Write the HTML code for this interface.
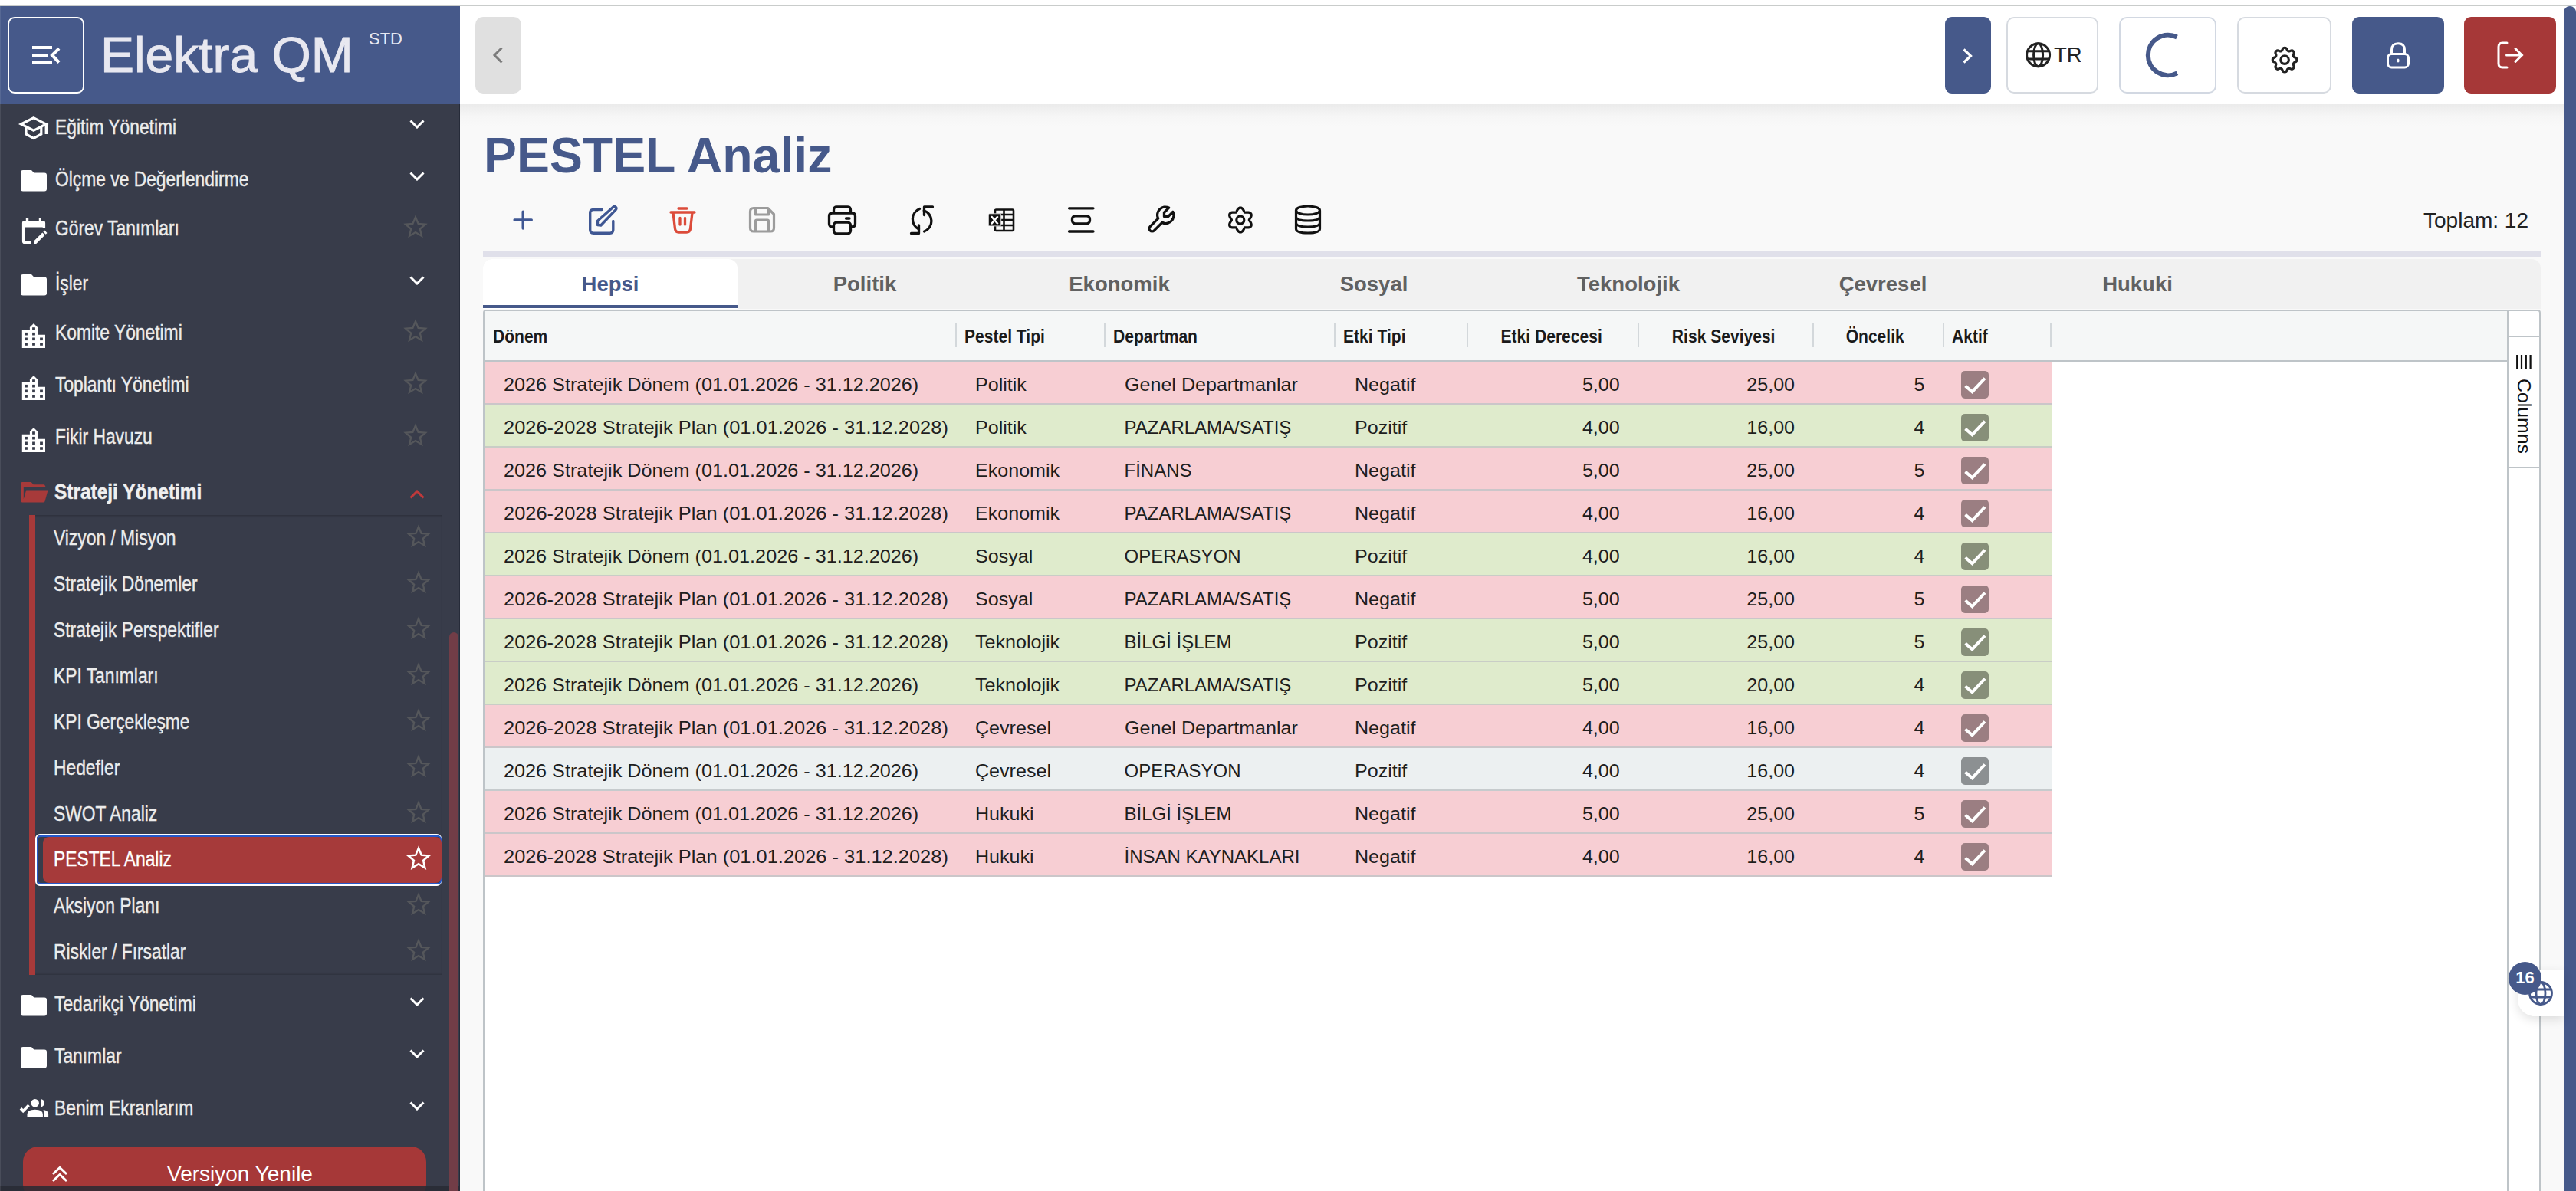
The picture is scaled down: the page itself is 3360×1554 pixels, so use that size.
<!DOCTYPE html>
<html><head><meta charset="utf-8"><style>
html,body{margin:0;padding:0;width:3360px;height:1554px;overflow:hidden;background:#fff;font-family:"Liberation Sans", sans-serif;}
body{position:relative;}
</style></head><body>
<div style="position:absolute;left:0px;top:0px;width:3360px;height:6px;background:#fff"></div>
<div style="position:absolute;left:0px;top:6px;width:3360px;height:2px;background:#c9cccb"></div>
<div style="position:absolute;left:0px;top:8px;width:600px;height:128px;background:#46598a"></div>
<div style="position:absolute;left:0px;top:136px;width:600px;height:1418px;background:#383c4a"></div>
<div style="position:absolute;left:600px;top:8px;width:2744px;height:128px;background:#fff"></div>
<div style="position:absolute;left:600px;top:136px;width:2744px;height:1418px;background:linear-gradient(#ebebeb 0px,#f6f6f6 16px,#f9f9f9 30px)"></div>
<div style="position:absolute;left:10px;top:22px;width:100px;height:100px;box-sizing:border-box;border:2px solid #fff;border-radius:9px"></div>
<svg style="position:absolute;left:40px;top:58px;" width="40" height="28" viewBox="0 0 40 28"><path d="M2 3.9H28M2 14H22M2 24H28" stroke="#fff" stroke-width="4"/><path d="M37 5.2L28 14L37 23.5" stroke="#fff" stroke-width="4" fill="none"/></svg>
<div style="position:absolute;left:131px;top:39.82px;font-size:64px;line-height:64px;color:#e8e8f0;font-weight:normal;white-space:nowrap;transform:scaleX(1.03);transform-origin:0 0;-webkit-text-stroke:0.9px #e8e8f0;">Elektra QM</div>
<div style="position:absolute;left:481px;top:40.18px;font-size:22px;line-height:22px;color:#e8e8f0;font-weight:normal;white-space:nowrap;transform-origin:0 0;">STD</div>
<svg style="position:absolute;left:24px;top:148.6px;" width="40" height="36" viewBox="0 0 40 36"><g fill="none" stroke="#fff" stroke-width="3.2" stroke-linejoin="miter"><path d="M3.5 13L19.8 4.7L36 13L19.8 21.3Z"/><path d="M10 15.5V26L19.8 31.5L29.8 26V15.5"/><path d="M36.3 12V26" stroke-width="3.4"/></g></svg>
<div style="position:absolute;left:71.5px;top:152.74px;font-size:27px;line-height:27px;color:#ececec;font-weight:normal;white-space:nowrap;transform:scaleX(0.845);transform-origin:0 0;-webkit-text-stroke:0.4px #ececec;">Eğitim Yönetimi</div>
<svg style="position:absolute;left:534px;top:156.29999999999998px;" width="20" height="12" viewBox="0 0 20 12"><path d="M1.5 1.5L10 10L18.5 1.5" stroke="#fff" stroke-width="3" fill="none" stroke-linecap="butt"/></svg>
<svg style="position:absolute;left:27px;top:221.6px;" width="34" height="28" viewBox="0 0 34 28"><path d="M0 3Q0 0 3 0H14L17.3 3.5H31Q34 3.5 34 6.5V24.5Q34 27.5 31 27.5H3Q0 27.5 0 24.5Z" fill="#fff"/></svg>
<div style="position:absolute;left:71.5px;top:220.74px;font-size:27px;line-height:27px;color:#ececec;font-weight:normal;white-space:nowrap;transform:scaleX(0.845);transform-origin:0 0;-webkit-text-stroke:0.4px #ececec;">Ölçme ve Değerlendirme</div>
<svg style="position:absolute;left:534px;top:224.29999999999998px;" width="20" height="12" viewBox="0 0 20 12"><path d="M1.5 1.5L10 10L18.5 1.5" stroke="#fff" stroke-width="3" fill="none" stroke-linecap="butt"/></svg>
<svg style="position:absolute;left:28px;top:283.70000000000005px;" width="34" height="35" viewBox="0 0 34 35"><path d="M0.9 7Q0.9 3.9 4 3.9H5.8V0.7H9.2V3.9H22.8V0.7H26V3.9H28Q31.1 3.9 31.1 7V14H27.7V12.4H4.3V30.7H13V34.1H4Q0.9 34.1 0.9 31Z" fill="#fff"/><path d="M16 34.1V30.8L27.3 19.5L30.6 22.8L19.3 34.1Z" fill="#fff"/><path d="M28.4 18.4L30.2 16.6L33.5 19.9L31.7 21.7Z" fill="#fff"/></svg>
<div style="position:absolute;left:72px;top:285.34px;font-size:27px;line-height:27px;color:#ececec;font-weight:normal;white-space:nowrap;transform:scaleX(0.845);transform-origin:0 0;-webkit-text-stroke:0.4px #ececec;">Görev Tanımları</div>
<svg style="position:absolute;left:0;top:0" width="600" height="1554" viewBox="0 0 600 1554"><polygon points="542.00,283.30 545.60,291.95 554.93,292.70 547.82,298.79 549.99,307.90 542.00,303.02 534.01,307.90 536.18,298.79 529.07,292.70 538.40,291.95" fill="none" stroke="#55575b" stroke-width="2.3" stroke-linejoin="miter"/></svg>
<svg style="position:absolute;left:27px;top:357.6px;" width="34" height="28" viewBox="0 0 34 28"><path d="M0 3Q0 0 3 0H14L17.3 3.5H31Q34 3.5 34 6.5V24.5Q34 27.5 31 27.5H3Q0 27.5 0 24.5Z" fill="#fff"/></svg>
<div style="position:absolute;left:71.5px;top:356.74px;font-size:27px;line-height:27px;color:#ececec;font-weight:normal;white-space:nowrap;transform:scaleX(0.845);transform-origin:0 0;-webkit-text-stroke:0.4px #ececec;">İşler</div>
<svg style="position:absolute;left:534px;top:360.3px;" width="20" height="12" viewBox="0 0 20 12"><path d="M1.5 1.5L10 10L18.5 1.5" stroke="#fff" stroke-width="3" fill="none" stroke-linecap="butt"/></svg>
<svg style="position:absolute;left:28px;top:420.70000000000005px;" width="32" height="34" viewBox="0 0 32 34"><path d="M0.8 9.7H10.9V6L16 1L21 6V15.8H31V33H0.8Z" fill="#fff"/><rect x="4.1" y="12.899999999999999" width="3.8" height="3.6" fill="#383c4a"/><rect x="14.1" y="6.2" width="3.8" height="3.6" fill="#383c4a"/><rect x="14.1" y="12.899999999999999" width="3.8" height="3.6" fill="#383c4a"/><rect x="4.1" y="19.5" width="3.8" height="3.6" fill="#383c4a"/><rect x="14.1" y="19.5" width="3.8" height="3.6" fill="#383c4a"/><rect x="24.1" y="19.5" width="3.8" height="3.6" fill="#383c4a"/><rect x="4.1" y="26.2" width="3.8" height="3.6" fill="#383c4a"/><rect x="14.1" y="26.2" width="3.8" height="3.6" fill="#383c4a"/><rect x="24.1" y="26.2" width="3.8" height="3.6" fill="#383c4a"/></svg>
<div style="position:absolute;left:71.5px;top:421.34px;font-size:27px;line-height:27px;color:#ececec;font-weight:normal;white-space:nowrap;transform:scaleX(0.845);transform-origin:0 0;-webkit-text-stroke:0.4px #ececec;">Komite Yönetimi</div>
<svg style="position:absolute;left:0;top:0" width="600" height="1554" viewBox="0 0 600 1554"><polygon points="542.00,419.30 545.60,427.95 554.93,428.70 547.82,434.79 549.99,443.90 542.00,439.02 534.01,443.90 536.18,434.79 529.07,428.70 538.40,427.95" fill="none" stroke="#55575b" stroke-width="2.3" stroke-linejoin="miter"/></svg>
<svg style="position:absolute;left:28px;top:488.70000000000005px;" width="32" height="34" viewBox="0 0 32 34"><path d="M0.8 9.7H10.9V6L16 1L21 6V15.8H31V33H0.8Z" fill="#fff"/><rect x="4.1" y="12.899999999999999" width="3.8" height="3.6" fill="#383c4a"/><rect x="14.1" y="6.2" width="3.8" height="3.6" fill="#383c4a"/><rect x="14.1" y="12.899999999999999" width="3.8" height="3.6" fill="#383c4a"/><rect x="4.1" y="19.5" width="3.8" height="3.6" fill="#383c4a"/><rect x="14.1" y="19.5" width="3.8" height="3.6" fill="#383c4a"/><rect x="24.1" y="19.5" width="3.8" height="3.6" fill="#383c4a"/><rect x="4.1" y="26.2" width="3.8" height="3.6" fill="#383c4a"/><rect x="14.1" y="26.2" width="3.8" height="3.6" fill="#383c4a"/><rect x="24.1" y="26.2" width="3.8" height="3.6" fill="#383c4a"/></svg>
<div style="position:absolute;left:71.5px;top:489.34px;font-size:27px;line-height:27px;color:#ececec;font-weight:normal;white-space:nowrap;transform:scaleX(0.845);transform-origin:0 0;-webkit-text-stroke:0.4px #ececec;">Toplantı Yönetimi</div>
<svg style="position:absolute;left:0;top:0" width="600" height="1554" viewBox="0 0 600 1554"><polygon points="542.00,487.30 545.60,495.95 554.93,496.70 547.82,502.79 549.99,511.90 542.00,507.02 534.01,511.90 536.18,502.79 529.07,496.70 538.40,495.95" fill="none" stroke="#55575b" stroke-width="2.3" stroke-linejoin="miter"/></svg>
<svg style="position:absolute;left:28px;top:556.7px;" width="32" height="34" viewBox="0 0 32 34"><path d="M0.8 9.7H10.9V6L16 1L21 6V15.8H31V33H0.8Z" fill="#fff"/><rect x="4.1" y="12.899999999999999" width="3.8" height="3.6" fill="#383c4a"/><rect x="14.1" y="6.2" width="3.8" height="3.6" fill="#383c4a"/><rect x="14.1" y="12.899999999999999" width="3.8" height="3.6" fill="#383c4a"/><rect x="4.1" y="19.5" width="3.8" height="3.6" fill="#383c4a"/><rect x="14.1" y="19.5" width="3.8" height="3.6" fill="#383c4a"/><rect x="24.1" y="19.5" width="3.8" height="3.6" fill="#383c4a"/><rect x="4.1" y="26.2" width="3.8" height="3.6" fill="#383c4a"/><rect x="14.1" y="26.2" width="3.8" height="3.6" fill="#383c4a"/><rect x="24.1" y="26.2" width="3.8" height="3.6" fill="#383c4a"/></svg>
<div style="position:absolute;left:71.5px;top:557.34px;font-size:27px;line-height:27px;color:#ececec;font-weight:normal;white-space:nowrap;transform:scaleX(0.845);transform-origin:0 0;-webkit-text-stroke:0.4px #ececec;">Fikir Havuzu</div>
<svg style="position:absolute;left:0;top:0" width="600" height="1554" viewBox="0 0 600 1554"><polygon points="542.00,555.30 545.60,563.95 554.93,564.70 547.82,570.79 549.99,579.90 542.00,575.02 534.01,579.90 536.18,570.79 529.07,564.70 538.40,563.95" fill="none" stroke="#55575b" stroke-width="2.3" stroke-linejoin="miter"/></svg>
<svg style="position:absolute;left:27px;top:628.6px;" width="36" height="27" viewBox="0 0 36 27"><path d="M0 2Q0 0 2 0H13.6L16.7 3.3H29.8Q31.2 3.3 31.7 4.5L32.7 6.6H3.8V22.3L7.2 10.4H35.6L31.6 25Q31.2 26.5 29.4 26.5H2Q0 26.5 0 24.5Z" fill="#a73a3a"/></svg>
<div style="position:absolute;left:71px;top:628.74px;font-size:27px;line-height:27px;color:#f0f0f0;font-weight:bold;white-space:nowrap;transform:scaleX(0.905);transform-origin:0 0;-webkit-text-stroke:0.5px #f0f0f0;">Strateji Yönetimi</div>
<svg style="position:absolute;left:534px;top:639.1px;" width="20" height="12" viewBox="0 0 20 12"><path d="M1.5 10.5L10 2L18.5 10.5" stroke="#c0393b" stroke-width="3" fill="none" stroke-linecap="butt"/></svg>
<div style="position:absolute;left:38px;top:672px;width:538px;height:600px;background:#383c4a;box-shadow:inset 0 3px 3px -2px rgba(0,0,0,.25), inset 0 -3px 3px -2px rgba(0,0,0,.2)"></div>
<div style="position:absolute;left:38px;top:672px;width:8px;height:600px;background:#a73a3a"></div>
<div style="position:absolute;left:70px;top:689.14px;font-size:27px;line-height:27px;color:#ececec;font-weight:normal;white-space:nowrap;transform:scaleX(0.845);transform-origin:0 0;-webkit-text-stroke:0.4px #ececec;">Vizyon / Misyon</div>
<svg style="position:absolute;left:0;top:0" width="600" height="1554" viewBox="0 0 600 1554"><polygon points="546.00,687.30 549.60,695.95 558.93,696.70 551.82,702.79 553.99,711.90 546.00,707.02 538.01,711.90 540.18,702.79 533.07,696.70 542.40,695.95" fill="none" stroke="#55575b" stroke-width="2.3" stroke-linejoin="miter"/></svg>
<div style="position:absolute;left:70px;top:749.14px;font-size:27px;line-height:27px;color:#ececec;font-weight:normal;white-space:nowrap;transform:scaleX(0.845);transform-origin:0 0;-webkit-text-stroke:0.4px #ececec;">Stratejik Dönemler</div>
<svg style="position:absolute;left:0;top:0" width="600" height="1554" viewBox="0 0 600 1554"><polygon points="546.00,747.30 549.60,755.95 558.93,756.70 551.82,762.79 553.99,771.90 546.00,767.02 538.01,771.90 540.18,762.79 533.07,756.70 542.40,755.95" fill="none" stroke="#55575b" stroke-width="2.3" stroke-linejoin="miter"/></svg>
<div style="position:absolute;left:70px;top:809.14px;font-size:27px;line-height:27px;color:#ececec;font-weight:normal;white-space:nowrap;transform:scaleX(0.845);transform-origin:0 0;-webkit-text-stroke:0.4px #ececec;">Stratejik Perspektifler</div>
<svg style="position:absolute;left:0;top:0" width="600" height="1554" viewBox="0 0 600 1554"><polygon points="546.00,807.30 549.60,815.95 558.93,816.70 551.82,822.79 553.99,831.90 546.00,827.02 538.01,831.90 540.18,822.79 533.07,816.70 542.40,815.95" fill="none" stroke="#55575b" stroke-width="2.3" stroke-linejoin="miter"/></svg>
<div style="position:absolute;left:70px;top:869.14px;font-size:27px;line-height:27px;color:#ececec;font-weight:normal;white-space:nowrap;transform:scaleX(0.845);transform-origin:0 0;-webkit-text-stroke:0.4px #ececec;">KPI Tanımları</div>
<svg style="position:absolute;left:0;top:0" width="600" height="1554" viewBox="0 0 600 1554"><polygon points="546.00,867.30 549.60,875.95 558.93,876.70 551.82,882.79 553.99,891.90 546.00,887.02 538.01,891.90 540.18,882.79 533.07,876.70 542.40,875.95" fill="none" stroke="#55575b" stroke-width="2.3" stroke-linejoin="miter"/></svg>
<div style="position:absolute;left:70px;top:929.14px;font-size:27px;line-height:27px;color:#ececec;font-weight:normal;white-space:nowrap;transform:scaleX(0.845);transform-origin:0 0;-webkit-text-stroke:0.4px #ececec;">KPI Gerçekleşme</div>
<svg style="position:absolute;left:0;top:0" width="600" height="1554" viewBox="0 0 600 1554"><polygon points="546.00,927.30 549.60,935.95 558.93,936.70 551.82,942.79 553.99,951.90 546.00,947.02 538.01,951.90 540.18,942.79 533.07,936.70 542.40,935.95" fill="none" stroke="#55575b" stroke-width="2.3" stroke-linejoin="miter"/></svg>
<div style="position:absolute;left:70px;top:989.14px;font-size:27px;line-height:27px;color:#ececec;font-weight:normal;white-space:nowrap;transform:scaleX(0.845);transform-origin:0 0;-webkit-text-stroke:0.4px #ececec;">Hedefler</div>
<svg style="position:absolute;left:0;top:0" width="600" height="1554" viewBox="0 0 600 1554"><polygon points="546.00,987.30 549.60,995.95 558.93,996.70 551.82,1002.79 553.99,1011.90 546.00,1007.02 538.01,1011.90 540.18,1002.79 533.07,996.70 542.40,995.95" fill="none" stroke="#55575b" stroke-width="2.3" stroke-linejoin="miter"/></svg>
<div style="position:absolute;left:70px;top:1049.14px;font-size:27px;line-height:27px;color:#ececec;font-weight:normal;white-space:nowrap;transform:scaleX(0.845);transform-origin:0 0;-webkit-text-stroke:0.4px #ececec;">SWOT Analiz</div>
<svg style="position:absolute;left:0;top:0" width="600" height="1554" viewBox="0 0 600 1554"><polygon points="546.00,1047.30 549.60,1055.95 558.93,1056.70 551.82,1062.79 553.99,1071.90 546.00,1067.02 538.01,1071.90 540.18,1062.79 533.07,1056.70 542.40,1055.95" fill="none" stroke="#55575b" stroke-width="2.3" stroke-linejoin="miter"/></svg>
<div style="position:absolute;left:46px;top:1088px;width:530px;height:68px;box-sizing:border-box;border:2px solid #fff;border-radius:6px"></div>
<div style="position:absolute;left:47.5px;top:1090px;width:528.5px;height:64px;box-sizing:border-box;border:2.2px solid #2458c9;border-radius:5px;background:#383c4a"></div>
<div style="position:absolute;left:56px;top:1092px;width:520px;height:60px;background:#a63a3a;border-radius:8px"></div>
<div style="position:absolute;left:70px;top:1108.14px;font-size:27px;line-height:27px;color:#fff;font-weight:normal;white-space:nowrap;transform:scaleX(0.845);transform-origin:0 0;-webkit-text-stroke:0.4px #fff;">PESTEL Analiz</div>
<svg style="position:absolute;left:0;top:0" width="600" height="1554" viewBox="0 0 600 1554"><polygon points="546.00,1106.60 549.76,1115.63 559.51,1116.41 552.08,1122.77 554.35,1132.29 546.00,1127.19 537.65,1132.29 539.92,1122.77 532.49,1116.41 542.24,1115.63" fill="none" stroke="#fff" stroke-width="2.5" stroke-linejoin="miter"/></svg>
<div style="position:absolute;left:70px;top:1169.14px;font-size:27px;line-height:27px;color:#ececec;font-weight:normal;white-space:nowrap;transform:scaleX(0.845);transform-origin:0 0;-webkit-text-stroke:0.4px #ececec;">Aksiyon Planı</div>
<svg style="position:absolute;left:0;top:0" width="600" height="1554" viewBox="0 0 600 1554"><polygon points="546.00,1167.30 549.60,1175.95 558.93,1176.70 551.82,1182.79 553.99,1191.90 546.00,1187.02 538.01,1191.90 540.18,1182.79 533.07,1176.70 542.40,1175.95" fill="none" stroke="#55575b" stroke-width="2.3" stroke-linejoin="miter"/></svg>
<div style="position:absolute;left:70px;top:1229.14px;font-size:27px;line-height:27px;color:#ececec;font-weight:normal;white-space:nowrap;transform:scaleX(0.845);transform-origin:0 0;-webkit-text-stroke:0.4px #ececec;">Riskler / Fırsatlar</div>
<svg style="position:absolute;left:0;top:0" width="600" height="1554" viewBox="0 0 600 1554"><polygon points="546.00,1227.30 549.60,1235.95 558.93,1236.70 551.82,1242.79 553.99,1251.90 546.00,1247.02 538.01,1251.90 540.18,1242.79 533.07,1236.70 542.40,1235.95" fill="none" stroke="#55575b" stroke-width="2.3" stroke-linejoin="miter"/></svg>
<svg style="position:absolute;left:27px;top:1297.6px;" width="34" height="28" viewBox="0 0 34 28"><path d="M0 3Q0 0 3 0H14L17.3 3.5H31Q34 3.5 34 6.5V24.5Q34 27.5 31 27.5H3Q0 27.5 0 24.5Z" fill="#fff"/></svg>
<div style="position:absolute;left:71px;top:1296.74px;font-size:27px;line-height:27px;color:#ececec;font-weight:normal;white-space:nowrap;transform:scaleX(0.845);transform-origin:0 0;-webkit-text-stroke:0.4px #ececec;">Tedarikçi Yönetimi</div>
<svg style="position:absolute;left:534px;top:1300.6px;" width="20" height="12" viewBox="0 0 20 12"><path d="M1.5 1.5L10 10L18.5 1.5" stroke="#fff" stroke-width="3" fill="none" stroke-linecap="butt"/></svg>
<svg style="position:absolute;left:27px;top:1365.6px;" width="34" height="28" viewBox="0 0 34 28"><path d="M0 3Q0 0 3 0H14L17.3 3.5H31Q34 3.5 34 6.5V24.5Q34 27.5 31 27.5H3Q0 27.5 0 24.5Z" fill="#fff"/></svg>
<div style="position:absolute;left:71px;top:1364.74px;font-size:27px;line-height:27px;color:#ececec;font-weight:normal;white-space:nowrap;transform:scaleX(0.845);transform-origin:0 0;-webkit-text-stroke:0.4px #ececec;">Tanımlar</div>
<svg style="position:absolute;left:534px;top:1368.6px;" width="20" height="12" viewBox="0 0 20 12"><path d="M1.5 1.5L10 10L18.5 1.5" stroke="#fff" stroke-width="3" fill="none" stroke-linecap="butt"/></svg>
<svg style="position:absolute;left:24px;top:1430.1px;" width="42" height="30" viewBox="0 0 42 30"><path d="M3 16.2L6.2 19.7L13.6 12" stroke="#fff" stroke-width="3.6" fill="none"/><circle cx="21.7" cy="9.2" r="5.2" fill="#fff"/><path d="M11.5 27.9V24Q11.5 17.7 21.7 17.7Q31.9 17.7 31.9 24V27.9Z" fill="#fff"/><path d="M28.9 3.9A5.2 5.2 0 0 1 28.9 14.3Q31 9.1 28.9 3.9Z" fill="#fff"/><path d="M32.5 18Q39.1 19 39.1 24V27.9H34V24Q34 20 32.5 18Z" fill="#fff"/></svg>
<div style="position:absolute;left:71px;top:1432.74px;font-size:27px;line-height:27px;color:#ececec;font-weight:normal;white-space:nowrap;transform:scaleX(0.845);transform-origin:0 0;-webkit-text-stroke:0.4px #ececec;">Benim Ekranlarım</div>
<svg style="position:absolute;left:534px;top:1436.6px;" width="20" height="12" viewBox="0 0 20 12"><path d="M1.5 1.5L10 10L18.5 1.5" stroke="#fff" stroke-width="3" fill="none" stroke-linecap="butt"/></svg>
<div style="position:absolute;left:30px;top:1496px;width:526px;height:70px;background:#a63838;border-radius:20px"></div>
<svg style="position:absolute;left:66px;top:1520px;" width="24" height="24" viewBox="0 0 24 24"><path d="M3 12L12 3.5L21 12M3 21L12 12.5L21 21" stroke="#fff" stroke-width="3" fill="none"/></svg>
<div style="position:absolute;left:218px;top:1518.00px;font-size:28px;line-height:28px;color:#fff;font-weight:normal;white-space:nowrap;transform-origin:0 0;">Versiyon Yenile</div>
<div style="position:absolute;left:0px;top:1547px;width:600px;height:7px;background:rgba(40,42,52,.85)"></div>
<div style="position:absolute;left:586px;top:824.5px;width:12px;height:730px;background:#723d47;border-radius:6px 6px 0 0"></div>
<div style="position:absolute;left:599px;top:136px;width:1px;height:1418px;background:#262b39"></div>
<div style="position:absolute;left:0px;top:8px;width:1px;height:1546px;background:rgba(255,255,255,.09)"></div>
<div style="position:absolute;left:620px;top:22px;width:60px;height:100px;background:#e0e0e0;border-radius:10px"></div>
<svg style="position:absolute;left:640px;top:60px;" width="20" height="24" viewBox="0 0 20 24"><path d="M14.5 2.5L5 12L14.5 21.5" stroke="#7c7c7c" stroke-width="3" fill="none"/></svg>
<div style="position:absolute;left:2537px;top:22px;width:60px;height:100px;background:#46598a;border-radius:9px"></div>
<svg style="position:absolute;left:2557px;top:62px;" width="20" height="22" viewBox="0 0 20 22"><path d="M4.5 2.5L13.5 11L4.5 19.5" stroke="#fff" stroke-width="3.2" fill="none"/></svg>
<div style="position:absolute;left:2617px;top:22px;width:120px;height:100px;box-sizing:border-box;border:2px solid #d6dae0;border-radius:10px;background:#fff"></div>
<svg style="position:absolute;left:2640px;top:53px;" width="38" height="38" viewBox="0 0 38 38"><g fill="none" stroke="#222" stroke-width="3"><circle cx="18.6" cy="18.8" r="15"/><ellipse cx="18.6" cy="18.8" rx="6" ry="15"/><path d="M4 13.7H33.2M4 23.9H33.2"/></g></svg>
<div style="position:absolute;left:2679px;top:58.42px;font-size:27.5px;line-height:27.5px;color:#222;font-weight:normal;white-space:nowrap;transform-origin:0 0;">TR</div>
<div style="position:absolute;left:2764px;top:22px;width:127px;height:100px;box-sizing:border-box;border:2px solid #d2d8e2;border-radius:10px;background:#fff"></div>
<svg style="position:absolute;left:0;top:0" width="3360" height="140"><path d="M2839.49 48.45 A26.2 26.2 0 1 0 2839.89 95.34" stroke="#46598a" stroke-width="6" fill="none"/></svg>
<div style="position:absolute;left:2918px;top:22px;width:123px;height:100px;box-sizing:border-box;border:2px solid #d6dae0;border-radius:10px;background:#fff"></div>
<svg style="position:absolute;left:2958.8px;top:56.6px;" width="42.2" height="42.2" viewBox="0 0 24 24"><g fill="none" stroke="#222" stroke-width="1.8" stroke-linecap="round" stroke-linejoin="round"><path d="M10.325 4.317c.426 -1.756 2.924 -1.756 3.35 0a1.724 1.724 0 0 0 2.573 1.066c1.543 -.94 3.31 .826 2.37 2.37a1.724 1.724 0 0 0 1.065 2.572c1.756 .426 1.756 2.924 0 3.35a1.724 1.724 0 0 0 -1.066 2.573c.94 1.543 -.826 3.31 -2.37 2.37a1.724 1.724 0 0 0 -2.572 1.065c-.426 1.756 -2.924 1.756 -3.35 0a1.724 1.724 0 0 0 -2.573 -1.066c-1.543 .94 -3.31 -.826 -2.37 -2.37a1.724 1.724 0 0 0 -1.065 -2.572c-1.756 -.426 -1.756 -2.924 0 -3.35a1.724 1.724 0 0 0 1.066 -2.573c-.94 -1.543 .826 -3.31 2.37 -2.37c1 .608 2.296 .07 2.572 -1.065z"/><path d="M9 12a3 3 0 1 0 6 0a3 3 0 0 0 -6 0"/></g></svg>
<div style="position:absolute;left:3068px;top:22px;width:120px;height:100px;background:#46598a;border-radius:9px"></div>
<svg style="position:absolute;left:3110px;top:53px;" width="36" height="38" viewBox="0 0 36 38"><g fill="none" stroke="#fff" stroke-width="3"><rect x="4.5" y="17.5" width="27" height="17.5" rx="5"/><path d="M9.5 17.5V12Q9.5 3.7 18 3.7Q26.5 3.7 26.5 12V17.5"/></g><ellipse cx="18" cy="26" rx="1.6" ry="2.6" fill="#fff"/></svg>
<div style="position:absolute;left:3214px;top:22px;width:120px;height:100px;background:#a63838;border-radius:9px"></div>
<svg style="position:absolute;left:3254px;top:52px;" width="40" height="40" viewBox="0 0 40 40"><g fill="none" stroke="#fff" stroke-width="3" stroke-linecap="round"><path d="M16 4H10Q5 4 5 9V31Q5 36 10 36H16"/><path d="M15.5 20H35M27 11.5L35.5 20L27 28.5"/></g></svg>
<div style="position:absolute;left:3344px;top:8px;width:16px;height:1546px;background:#46598a;border-radius:8px 8px 0 0"></div>
<div style="position:absolute;left:631px;top:171.32px;font-size:64px;line-height:64px;color:#46598a;font-weight:bold;white-space:nowrap;transform:scaleX(1.006);transform-origin:0 0;">PESTEL Analiz</div>
<div style="position:absolute;right:62px;top:273.70px;font-size:28px;line-height:28px;color:#222;font-weight:normal;white-space:nowrap;transform-origin:100% 0;">Toplam: 12</div>
<svg style="position:absolute;left:664px;top:270px;" width="36" height="34" viewBox="0 0 36 34"><path d="M18.2 6.1V28M7.1 17H29.3" stroke="#3f5793" stroke-width="3.4" stroke-linecap="round"/></svg>
<svg style="position:absolute;left:764px;top:266px;" width="44" height="42" viewBox="0 0 44 42"><g fill="none" stroke="#3f5793" stroke-width="3.4" stroke-linecap="round" stroke-linejoin="round"><path d="M21 7.5H10Q5.7 7.5 5.7 11.8V33.8Q5.7 38.2 10 38.2H31.6Q35.8 38.2 35.8 33.8V22.5"/><path d="M15.5 27.5V22.3L35.7 4.2Q37.4 2.7 39.1 4.3Q40.7 5.9 39.2 7.6L19.8 28Z"/></g></svg>
<svg style="position:absolute;left:870px;top:268px;" width="40" height="40" viewBox="0 0 40 40"><g fill="none" stroke="#dc4b3a" stroke-width="3.3" stroke-linecap="round" stroke-linejoin="round"><path d="M15 4H26M5 9H36M8 9.5L10.5 30.5Q11 35 15.5 35H25.5Q30 35 30.5 30.5L33 9.5M17 16.5V25M23.5 16.5V25"/></g></svg>
<svg style="position:absolute;left:974px;top:266px;" width="40" height="42" viewBox="0 0 40 42"><g fill="none" stroke="#9c9c9c" stroke-width="3.2" stroke-linejoin="round"><path d="M9 5.5H27.5L35.5 13.5V31.5Q35.5 36 31 36H9Q4.5 36 4.5 31.5V10Q4.5 5.5 9 5.5Z"/><path d="M11.5 5.5V14H28.5V5.5M11.5 36V22.5Q11.5 21 13 21H27Q28.5 21 28.5 22.5V36"/></g></svg>
<svg style="position:absolute;left:1078px;top:266px;" width="40" height="42" viewBox="0 0 40 42"><g fill="none" stroke="#111" stroke-width="3.3" stroke-linejoin="round"><path d="M9.5 12V8Q9.5 4 13.5 4H27.5Q31.5 4 31.5 8V12"/><path d="M9 30H7.5Q3.5 30 3.5 26V16Q3.5 12 7.5 12H33.5Q37.5 12 37.5 16V26Q37.5 30 33.5 30H32"/><rect x="9.5" y="24" width="22" height="15" rx="4"/><path d="M25.5 19H30" stroke-linecap="round"/></g></svg>
<svg style="position:absolute;left:1182px;top:266px;" width="40" height="42" viewBox="0 0 40 42"><g fill="none" stroke="#111" stroke-width="3.3" stroke-linecap="round" stroke-linejoin="round"><path d="M17.5 6.5A14.5 14.5 0 0 0 16.5 33"/><path d="M6.5 38.5H16.5V28"/><path d="M23.5 36A14.5 14.5 0 0 0 23.2 8.7"/><path d="M34.5 4H23.5V14.5"/></g></svg>
<svg style="position:absolute;left:1286px;top:268px;" width="40" height="36" viewBox="0 0 40 36"><g fill="none" stroke="#111" stroke-width="2.6"><rect x="12" y="5.5" width="24" height="27.5" rx="1.5"/><path d="M23.5 5.5V33M12 12H36M12 19H36M12 26H36"/></g><rect x="3.3" y="10.8" width="16.4" height="16.1" rx="1.5" fill="#111" stroke="#fafafa" stroke-width="0.8"/><path d="M7 14.2L15.6 24.2M15.6 14.2L7 24.2" stroke="#fff" stroke-width="2.5"/></svg>
<svg style="position:absolute;left:1390px;top:266px;" width="40" height="40" viewBox="0 0 40 40"><g fill="none" stroke="#111" stroke-width="3.3" stroke-linecap="round"><path d="M4.5 5.8H36M4.5 36H36"/><rect x="8.5" y="15.8" width="23" height="10" rx="4"/></g></svg>
<svg style="position:absolute;left:1493.6px;top:265px;" width="42" height="42" viewBox="0 0 24 24"><g transform="translate(24,0) scale(-1,1)"><path d="M7 10h3v-3l-3.5 -3.5a6 6 0 0 1 8 8l6 6a2 2 0 0 1 -3 3l-6 -6a6 6 0 0 1 -8 -8l3.5 3.5" fill="none" stroke="#111" stroke-width="1.9" stroke-linejoin="round" stroke-linecap="round"/></g></svg>
<svg style="position:absolute;left:0;top:0" width="3360" height="340"><path d="M1617.90 271.00 L1618.60 271.08 L1619.27 271.31 L1619.92 271.68 L1620.51 272.17 L1621.05 272.77 L1621.53 273.44 L1621.95 274.14 L1622.32 274.86 L1622.64 275.55 L1622.94 276.19 L1623.25 276.73 L1623.60 277.13 L1624.12 277.24 L1624.74 277.23 L1625.44 277.17 L1626.20 277.10 L1627.01 277.06 L1627.83 277.07 L1628.65 277.15 L1629.43 277.32 L1630.16 277.59 L1630.80 277.97 L1631.34 278.44 L1631.76 279.00 L1632.04 279.64 L1632.18 280.34 L1632.18 281.09 L1632.05 281.85 L1631.80 282.62 L1631.46 283.37 L1631.06 284.08 L1630.62 284.76 L1630.18 285.38 L1629.78 285.96 L1629.47 286.50 L1629.30 287.00 L1629.47 287.50 L1629.78 288.04 L1630.18 288.62 L1630.62 289.24 L1631.06 289.92 L1631.46 290.63 L1631.80 291.38 L1632.05 292.15 L1632.18 292.91 L1632.18 293.66 L1632.04 294.36 L1631.76 295.00 L1631.34 295.56 L1630.80 296.03 L1630.16 296.41 L1629.43 296.68 L1628.65 296.85 L1627.83 296.93 L1627.01 296.94 L1626.20 296.90 L1625.44 296.83 L1624.74 296.77 L1624.12 296.76 L1623.60 296.87 L1623.25 297.27 L1622.94 297.81 L1622.64 298.45 L1622.32 299.14 L1621.95 299.86 L1621.53 300.56 L1621.05 301.23 L1620.51 301.83 L1619.92 302.32 L1619.27 302.69 L1618.60 302.92 L1617.90 303.00 L1617.20 302.92 L1616.53 302.69 L1615.88 302.32 L1615.29 301.83 L1614.75 301.23 L1614.27 300.56 L1613.85 299.86 L1613.48 299.14 L1613.16 298.45 L1612.86 297.81 L1612.55 297.27 L1612.20 296.87 L1611.68 296.76 L1611.06 296.77 L1610.36 296.83 L1609.60 296.90 L1608.79 296.94 L1607.97 296.93 L1607.15 296.85 L1606.37 296.68 L1605.64 296.41 L1605.00 296.03 L1604.46 295.56 L1604.04 295.00 L1603.76 294.36 L1603.62 293.66 L1603.62 292.91 L1603.75 292.15 L1604.00 291.38 L1604.34 290.63 L1604.74 289.92 L1605.18 289.24 L1605.62 288.62 L1606.02 288.04 L1606.33 287.50 L1606.50 287.00 L1606.33 286.50 L1606.02 285.96 L1605.62 285.38 L1605.18 284.76 L1604.74 284.08 L1604.34 283.37 L1604.00 282.62 L1603.75 281.85 L1603.62 281.09 L1603.62 280.34 L1603.76 279.64 L1604.04 279.00 L1604.46 278.44 L1605.00 277.97 L1605.64 277.59 L1606.37 277.32 L1607.15 277.15 L1607.97 277.07 L1608.79 277.06 L1609.60 277.10 L1610.36 277.17 L1611.06 277.23 L1611.68 277.24 L1612.20 277.13 L1612.55 276.73 L1612.86 276.19 L1613.16 275.55 L1613.48 274.86 L1613.85 274.14 L1614.27 273.44 L1614.75 272.77 L1615.29 272.17 L1615.88 271.68 L1616.53 271.31 L1617.20 271.08Z" fill="none" stroke="#111" stroke-width="3.2" stroke-linejoin="round"/><circle cx="1617.8" cy="287" r="5" fill="none" stroke="#111" stroke-width="3.2"/></svg>
<svg style="position:absolute;left:1686px;top:266px;" width="40" height="42" viewBox="0 0 40 42"><g fill="none" stroke="#111" stroke-width="3.2"><ellipse cx="20" cy="8.5" rx="15.5" ry="5.5"/><path d="M4.5 8.5V32.5Q4.5 38 20 38Q35.5 38 35.5 32.5V8.5M4.5 16.5Q4.5 22 20 22Q35.5 22 35.5 16.5M4.5 24.5Q4.5 30 20 30Q35.5 30 35.5 24.5"/></g></svg>
<div style="position:absolute;left:630px;top:327px;width:2684px;height:8px;background:#e0e0ea"></div>
<div style="position:absolute;left:630px;top:338px;width:2684px;height:65px;background:#f1f1f1;border-radius:12px 12px 0 0"></div>
<div style="position:absolute;left:630px;top:338px;width:332px;height:65px;background:#fff;border-radius:12px 12px 0 0"></div>
<div style="position:absolute;left:630px;top:398px;width:332px;height:4px;background:#46598a"></div>
<div style="position:absolute;left:646px;width:300px;text-align:center;top:356.72px;font-size:27.5px;line-height:27.5px;font-weight:bold;color:#46598a;white-space:nowrap">Hepsi</div>
<div style="position:absolute;left:978px;width:300px;text-align:center;top:356.72px;font-size:27.5px;line-height:27.5px;font-weight:bold;color:#616161;white-space:nowrap">Politik</div>
<div style="position:absolute;left:1310px;width:300px;text-align:center;top:356.72px;font-size:27.5px;line-height:27.5px;font-weight:bold;color:#616161;white-space:nowrap">Ekonomik</div>
<div style="position:absolute;left:1642px;width:300px;text-align:center;top:356.72px;font-size:27.5px;line-height:27.5px;font-weight:bold;color:#616161;white-space:nowrap">Sosyal</div>
<div style="position:absolute;left:1974px;width:300px;text-align:center;top:356.72px;font-size:27.5px;line-height:27.5px;font-weight:bold;color:#616161;white-space:nowrap">Teknolojik</div>
<div style="position:absolute;left:2306px;width:300px;text-align:center;top:356.72px;font-size:27.5px;line-height:27.5px;font-weight:bold;color:#616161;white-space:nowrap">Çevresel</div>
<div style="position:absolute;left:2638px;width:300px;text-align:center;top:356.72px;font-size:27.5px;line-height:27.5px;font-weight:bold;color:#616161;white-space:nowrap">Hukuki</div>
<div style="position:absolute;left:630px;top:404px;width:2684px;height:1160px;box-sizing:border-box;border:2px solid #bec4c8;border-radius:4px;background:#fff"></div>
<div style="position:absolute;left:632px;top:406px;width:2639px;height:64px;background:#f5f7f7"></div>
<div style="position:absolute;left:632px;top:470px;width:2639px;height:2px;background:#bec4c8"></div>
<div style="position:absolute;left:3270px;top:406px;width:2px;height:1148px;background:#bec4c8"></div>
<div style="position:absolute;left:3272px;top:438px;width:40px;height:2px;background:#bec4c8"></div>
<div style="position:absolute;left:3272px;top:609px;width:40px;height:2px;background:#bec4c8"></div>
<svg style="position:absolute;left:3280px;top:461px;" width="24" height="22" viewBox="0 0 24 22"><path d="M3.2 2V20M9 2V20M14.8 2V20M20.6 2V20" stroke="#111" stroke-width="2.2"/></svg>
<div style="position:absolute;left:3279px;top:494px;width:25px;height:100px;"><div style="position:absolute;left:0;top:0;transform-origin:0 0;transform:translate(25px,0) rotate(90deg);font-size:24.8px;line-height:24.8px;color:#111;white-space:nowrap">Columns</div></div>
<div style="position:absolute;left:1246px;top:422px;width:2px;height:31px;background:#d3d8db"></div>
<div style="position:absolute;left:1440px;top:422px;width:2px;height:31px;background:#d3d8db"></div>
<div style="position:absolute;left:1740px;top:422px;width:2px;height:31px;background:#d3d8db"></div>
<div style="position:absolute;left:1913px;top:422px;width:2px;height:31px;background:#d3d8db"></div>
<div style="position:absolute;left:2136px;top:422px;width:2px;height:31px;background:#d3d8db"></div>
<div style="position:absolute;left:2364px;top:422px;width:2px;height:31px;background:#d3d8db"></div>
<div style="position:absolute;left:2534px;top:422px;width:2px;height:31px;background:#d3d8db"></div>
<div style="position:absolute;left:2674px;top:422px;width:2px;height:31px;background:#d3d8db"></div>
<div style="position:absolute;left:643px;top:426.68px;font-size:24px;line-height:24px;color:#1a1a1a;font-weight:bold;white-space:nowrap;transform:scaleX(0.877);transform-origin:0 0;">Dönem</div>
<div style="position:absolute;left:1258px;top:426.68px;font-size:24px;line-height:24px;color:#1a1a1a;font-weight:bold;white-space:nowrap;transform:scaleX(0.877);transform-origin:0 0;">Pestel Tipi</div>
<div style="position:absolute;left:1452px;top:426.68px;font-size:24px;line-height:24px;color:#1a1a1a;font-weight:bold;white-space:nowrap;transform:scaleX(0.877);transform-origin:0 0;">Departman</div>
<div style="position:absolute;left:1752px;top:426.68px;font-size:24px;line-height:24px;color:#1a1a1a;font-weight:bold;white-space:nowrap;transform:scaleX(0.877);transform-origin:0 0;">Etki Tipi</div>
<div style="position:absolute;right:1270px;top:426.68px;font-size:24px;line-height:24px;color:#1a1a1a;font-weight:bold;white-space:nowrap;transform:scaleX(0.877);transform-origin:100% 0;">Etki Derecesi</div>
<div style="position:absolute;right:1045px;top:426.68px;font-size:24px;line-height:24px;color:#1a1a1a;font-weight:bold;white-space:nowrap;transform:scaleX(0.877);transform-origin:100% 0;">Risk Seviyesi</div>
<div style="position:absolute;right:876px;top:426.68px;font-size:24px;line-height:24px;color:#1a1a1a;font-weight:bold;white-space:nowrap;transform:scaleX(0.877);transform-origin:100% 0;">Öncelik</div>
<div style="position:absolute;left:2546px;top:426.68px;font-size:24px;line-height:24px;color:#1a1a1a;font-weight:bold;white-space:nowrap;transform:scaleX(0.877);transform-origin:0 0;">Aktif</div>
<div style="position:absolute;left:632px;top:472px;width:2044px;height:54px;background:#f7ced3"></div>
<div style="position:absolute;left:632px;top:526px;width:2044px;height:2px;background:#cbc6c9"></div>
<div style="position:absolute;left:657px;top:489.68px;font-size:24px;line-height:24px;color:#1e1e1e;font-weight:normal;white-space:nowrap;transform:scaleX(1.051);transform-origin:0 0;">2026 Stratejik Dönem (01.01.2026 - 31.12.2026)</div>
<div style="position:absolute;left:1272px;top:489.68px;font-size:24px;line-height:24px;color:#1e1e1e;font-weight:normal;white-space:nowrap;transform:scaleX(1.045);transform-origin:0 0;">Politik</div>
<div style="position:absolute;left:1466.5px;top:489.68px;font-size:24px;line-height:24px;color:#1e1e1e;font-weight:normal;white-space:nowrap;transform:scaleX(1.045);transform-origin:0 0;">Genel Departmanlar</div>
<div style="position:absolute;left:1767px;top:489.68px;font-size:24px;line-height:24px;color:#1e1e1e;font-weight:normal;white-space:nowrap;transform:scaleX(1.045);transform-origin:0 0;">Negatif</div>
<div style="position:absolute;right:1247.5px;top:489.68px;font-size:24px;line-height:24px;color:#1e1e1e;font-weight:normal;white-space:nowrap;transform:scaleX(1.045);transform-origin:100% 0;">5,00</div>
<div style="position:absolute;right:1019px;top:489.68px;font-size:24px;line-height:24px;color:#1e1e1e;font-weight:normal;white-space:nowrap;transform:scaleX(1.045);transform-origin:100% 0;">25,00</div>
<div style="position:absolute;right:849.5px;top:489.68px;font-size:24px;line-height:24px;color:#1e1e1e;font-weight:normal;white-space:nowrap;transform:scaleX(1.045);transform-origin:100% 0;">5</div>
<div style="position:absolute;left:2558px;top:484px;width:36px;height:36px;background:#9b7e82;border-radius:5px"></div>
<svg style="position:absolute;left:2558px;top:484px;" width="36" height="36" viewBox="0 0 36 36"><path d="M5.5 19.5L14.5 27.2L31 9.5" stroke="#fff" stroke-width="4" fill="none"/></svg>
<div style="position:absolute;left:632px;top:528px;width:2044px;height:54px;background:#dfebcc"></div>
<div style="position:absolute;left:632px;top:582px;width:2044px;height:2px;background:#c9cdc6"></div>
<div style="position:absolute;left:657px;top:545.68px;font-size:24px;line-height:24px;color:#1e1e1e;font-weight:normal;white-space:nowrap;transform:scaleX(1.06);transform-origin:0 0;">2026-2028 Stratejik Plan (01.01.2026 - 31.12.2028)</div>
<div style="position:absolute;left:1272px;top:545.68px;font-size:24px;line-height:24px;color:#1e1e1e;font-weight:normal;white-space:nowrap;transform:scaleX(1.045);transform-origin:0 0;">Politik</div>
<div style="position:absolute;left:1466.5px;top:545.68px;font-size:24px;line-height:24px;color:#1e1e1e;font-weight:normal;white-space:nowrap;transform-origin:0 0;">PAZARLAMA/SATIŞ</div>
<div style="position:absolute;left:1767px;top:545.68px;font-size:24px;line-height:24px;color:#1e1e1e;font-weight:normal;white-space:nowrap;transform:scaleX(1.045);transform-origin:0 0;">Pozitif</div>
<div style="position:absolute;right:1247.5px;top:545.68px;font-size:24px;line-height:24px;color:#1e1e1e;font-weight:normal;white-space:nowrap;transform:scaleX(1.045);transform-origin:100% 0;">4,00</div>
<div style="position:absolute;right:1019px;top:545.68px;font-size:24px;line-height:24px;color:#1e1e1e;font-weight:normal;white-space:nowrap;transform:scaleX(1.045);transform-origin:100% 0;">16,00</div>
<div style="position:absolute;right:849.5px;top:545.68px;font-size:24px;line-height:24px;color:#1e1e1e;font-weight:normal;white-space:nowrap;transform:scaleX(1.045);transform-origin:100% 0;">4</div>
<div style="position:absolute;left:2558px;top:540px;width:36px;height:36px;background:#878f79;border-radius:5px"></div>
<svg style="position:absolute;left:2558px;top:540px;" width="36" height="36" viewBox="0 0 36 36"><path d="M5.5 19.5L14.5 27.2L31 9.5" stroke="#fff" stroke-width="4" fill="none"/></svg>
<div style="position:absolute;left:632px;top:584px;width:2044px;height:54px;background:#f7ced3"></div>
<div style="position:absolute;left:632px;top:638px;width:2044px;height:2px;background:#cbc6c9"></div>
<div style="position:absolute;left:657px;top:601.68px;font-size:24px;line-height:24px;color:#1e1e1e;font-weight:normal;white-space:nowrap;transform:scaleX(1.051);transform-origin:0 0;">2026 Stratejik Dönem (01.01.2026 - 31.12.2026)</div>
<div style="position:absolute;left:1272px;top:601.68px;font-size:24px;line-height:24px;color:#1e1e1e;font-weight:normal;white-space:nowrap;transform:scaleX(1.045);transform-origin:0 0;">Ekonomik</div>
<div style="position:absolute;left:1466.5px;top:601.68px;font-size:24px;line-height:24px;color:#1e1e1e;font-weight:normal;white-space:nowrap;transform-origin:0 0;">FİNANS</div>
<div style="position:absolute;left:1767px;top:601.68px;font-size:24px;line-height:24px;color:#1e1e1e;font-weight:normal;white-space:nowrap;transform:scaleX(1.045);transform-origin:0 0;">Negatif</div>
<div style="position:absolute;right:1247.5px;top:601.68px;font-size:24px;line-height:24px;color:#1e1e1e;font-weight:normal;white-space:nowrap;transform:scaleX(1.045);transform-origin:100% 0;">5,00</div>
<div style="position:absolute;right:1019px;top:601.68px;font-size:24px;line-height:24px;color:#1e1e1e;font-weight:normal;white-space:nowrap;transform:scaleX(1.045);transform-origin:100% 0;">25,00</div>
<div style="position:absolute;right:849.5px;top:601.68px;font-size:24px;line-height:24px;color:#1e1e1e;font-weight:normal;white-space:nowrap;transform:scaleX(1.045);transform-origin:100% 0;">5</div>
<div style="position:absolute;left:2558px;top:596px;width:36px;height:36px;background:#9b7e82;border-radius:5px"></div>
<svg style="position:absolute;left:2558px;top:596px;" width="36" height="36" viewBox="0 0 36 36"><path d="M5.5 19.5L14.5 27.2L31 9.5" stroke="#fff" stroke-width="4" fill="none"/></svg>
<div style="position:absolute;left:632px;top:640px;width:2044px;height:54px;background:#f7ced3"></div>
<div style="position:absolute;left:632px;top:694px;width:2044px;height:2px;background:#cbc6c9"></div>
<div style="position:absolute;left:657px;top:657.68px;font-size:24px;line-height:24px;color:#1e1e1e;font-weight:normal;white-space:nowrap;transform:scaleX(1.06);transform-origin:0 0;">2026-2028 Stratejik Plan (01.01.2026 - 31.12.2028)</div>
<div style="position:absolute;left:1272px;top:657.68px;font-size:24px;line-height:24px;color:#1e1e1e;font-weight:normal;white-space:nowrap;transform:scaleX(1.045);transform-origin:0 0;">Ekonomik</div>
<div style="position:absolute;left:1466.5px;top:657.68px;font-size:24px;line-height:24px;color:#1e1e1e;font-weight:normal;white-space:nowrap;transform-origin:0 0;">PAZARLAMA/SATIŞ</div>
<div style="position:absolute;left:1767px;top:657.68px;font-size:24px;line-height:24px;color:#1e1e1e;font-weight:normal;white-space:nowrap;transform:scaleX(1.045);transform-origin:0 0;">Negatif</div>
<div style="position:absolute;right:1247.5px;top:657.68px;font-size:24px;line-height:24px;color:#1e1e1e;font-weight:normal;white-space:nowrap;transform:scaleX(1.045);transform-origin:100% 0;">4,00</div>
<div style="position:absolute;right:1019px;top:657.68px;font-size:24px;line-height:24px;color:#1e1e1e;font-weight:normal;white-space:nowrap;transform:scaleX(1.045);transform-origin:100% 0;">16,00</div>
<div style="position:absolute;right:849.5px;top:657.68px;font-size:24px;line-height:24px;color:#1e1e1e;font-weight:normal;white-space:nowrap;transform:scaleX(1.045);transform-origin:100% 0;">4</div>
<div style="position:absolute;left:2558px;top:652px;width:36px;height:36px;background:#9b7e82;border-radius:5px"></div>
<svg style="position:absolute;left:2558px;top:652px;" width="36" height="36" viewBox="0 0 36 36"><path d="M5.5 19.5L14.5 27.2L31 9.5" stroke="#fff" stroke-width="4" fill="none"/></svg>
<div style="position:absolute;left:632px;top:696px;width:2044px;height:54px;background:#dfebcc"></div>
<div style="position:absolute;left:632px;top:750px;width:2044px;height:2px;background:#c9cdc6"></div>
<div style="position:absolute;left:657px;top:713.68px;font-size:24px;line-height:24px;color:#1e1e1e;font-weight:normal;white-space:nowrap;transform:scaleX(1.051);transform-origin:0 0;">2026 Stratejik Dönem (01.01.2026 - 31.12.2026)</div>
<div style="position:absolute;left:1272px;top:713.68px;font-size:24px;line-height:24px;color:#1e1e1e;font-weight:normal;white-space:nowrap;transform:scaleX(1.045);transform-origin:0 0;">Sosyal</div>
<div style="position:absolute;left:1466.5px;top:713.68px;font-size:24px;line-height:24px;color:#1e1e1e;font-weight:normal;white-space:nowrap;transform-origin:0 0;">OPERASYON</div>
<div style="position:absolute;left:1767px;top:713.68px;font-size:24px;line-height:24px;color:#1e1e1e;font-weight:normal;white-space:nowrap;transform:scaleX(1.045);transform-origin:0 0;">Pozitif</div>
<div style="position:absolute;right:1247.5px;top:713.68px;font-size:24px;line-height:24px;color:#1e1e1e;font-weight:normal;white-space:nowrap;transform:scaleX(1.045);transform-origin:100% 0;">4,00</div>
<div style="position:absolute;right:1019px;top:713.68px;font-size:24px;line-height:24px;color:#1e1e1e;font-weight:normal;white-space:nowrap;transform:scaleX(1.045);transform-origin:100% 0;">16,00</div>
<div style="position:absolute;right:849.5px;top:713.68px;font-size:24px;line-height:24px;color:#1e1e1e;font-weight:normal;white-space:nowrap;transform:scaleX(1.045);transform-origin:100% 0;">4</div>
<div style="position:absolute;left:2558px;top:708px;width:36px;height:36px;background:#878f79;border-radius:5px"></div>
<svg style="position:absolute;left:2558px;top:708px;" width="36" height="36" viewBox="0 0 36 36"><path d="M5.5 19.5L14.5 27.2L31 9.5" stroke="#fff" stroke-width="4" fill="none"/></svg>
<div style="position:absolute;left:632px;top:752px;width:2044px;height:54px;background:#f7ced3"></div>
<div style="position:absolute;left:632px;top:806px;width:2044px;height:2px;background:#cbc6c9"></div>
<div style="position:absolute;left:657px;top:769.68px;font-size:24px;line-height:24px;color:#1e1e1e;font-weight:normal;white-space:nowrap;transform:scaleX(1.06);transform-origin:0 0;">2026-2028 Stratejik Plan (01.01.2026 - 31.12.2028)</div>
<div style="position:absolute;left:1272px;top:769.68px;font-size:24px;line-height:24px;color:#1e1e1e;font-weight:normal;white-space:nowrap;transform:scaleX(1.045);transform-origin:0 0;">Sosyal</div>
<div style="position:absolute;left:1466.5px;top:769.68px;font-size:24px;line-height:24px;color:#1e1e1e;font-weight:normal;white-space:nowrap;transform-origin:0 0;">PAZARLAMA/SATIŞ</div>
<div style="position:absolute;left:1767px;top:769.68px;font-size:24px;line-height:24px;color:#1e1e1e;font-weight:normal;white-space:nowrap;transform:scaleX(1.045);transform-origin:0 0;">Negatif</div>
<div style="position:absolute;right:1247.5px;top:769.68px;font-size:24px;line-height:24px;color:#1e1e1e;font-weight:normal;white-space:nowrap;transform:scaleX(1.045);transform-origin:100% 0;">5,00</div>
<div style="position:absolute;right:1019px;top:769.68px;font-size:24px;line-height:24px;color:#1e1e1e;font-weight:normal;white-space:nowrap;transform:scaleX(1.045);transform-origin:100% 0;">25,00</div>
<div style="position:absolute;right:849.5px;top:769.68px;font-size:24px;line-height:24px;color:#1e1e1e;font-weight:normal;white-space:nowrap;transform:scaleX(1.045);transform-origin:100% 0;">5</div>
<div style="position:absolute;left:2558px;top:764px;width:36px;height:36px;background:#9b7e82;border-radius:5px"></div>
<svg style="position:absolute;left:2558px;top:764px;" width="36" height="36" viewBox="0 0 36 36"><path d="M5.5 19.5L14.5 27.2L31 9.5" stroke="#fff" stroke-width="4" fill="none"/></svg>
<div style="position:absolute;left:632px;top:808px;width:2044px;height:54px;background:#dfebcc"></div>
<div style="position:absolute;left:632px;top:862px;width:2044px;height:2px;background:#c9cdc6"></div>
<div style="position:absolute;left:657px;top:825.68px;font-size:24px;line-height:24px;color:#1e1e1e;font-weight:normal;white-space:nowrap;transform:scaleX(1.06);transform-origin:0 0;">2026-2028 Stratejik Plan (01.01.2026 - 31.12.2028)</div>
<div style="position:absolute;left:1272px;top:825.68px;font-size:24px;line-height:24px;color:#1e1e1e;font-weight:normal;white-space:nowrap;transform:scaleX(1.045);transform-origin:0 0;">Teknolojik</div>
<div style="position:absolute;left:1466.5px;top:825.68px;font-size:24px;line-height:24px;color:#1e1e1e;font-weight:normal;white-space:nowrap;transform-origin:0 0;">BİLGİ İŞLEM</div>
<div style="position:absolute;left:1767px;top:825.68px;font-size:24px;line-height:24px;color:#1e1e1e;font-weight:normal;white-space:nowrap;transform:scaleX(1.045);transform-origin:0 0;">Pozitif</div>
<div style="position:absolute;right:1247.5px;top:825.68px;font-size:24px;line-height:24px;color:#1e1e1e;font-weight:normal;white-space:nowrap;transform:scaleX(1.045);transform-origin:100% 0;">5,00</div>
<div style="position:absolute;right:1019px;top:825.68px;font-size:24px;line-height:24px;color:#1e1e1e;font-weight:normal;white-space:nowrap;transform:scaleX(1.045);transform-origin:100% 0;">25,00</div>
<div style="position:absolute;right:849.5px;top:825.68px;font-size:24px;line-height:24px;color:#1e1e1e;font-weight:normal;white-space:nowrap;transform:scaleX(1.045);transform-origin:100% 0;">5</div>
<div style="position:absolute;left:2558px;top:820px;width:36px;height:36px;background:#878f79;border-radius:5px"></div>
<svg style="position:absolute;left:2558px;top:820px;" width="36" height="36" viewBox="0 0 36 36"><path d="M5.5 19.5L14.5 27.2L31 9.5" stroke="#fff" stroke-width="4" fill="none"/></svg>
<div style="position:absolute;left:632px;top:864px;width:2044px;height:54px;background:#dfebcc"></div>
<div style="position:absolute;left:632px;top:918px;width:2044px;height:2px;background:#c9cdc6"></div>
<div style="position:absolute;left:657px;top:881.68px;font-size:24px;line-height:24px;color:#1e1e1e;font-weight:normal;white-space:nowrap;transform:scaleX(1.051);transform-origin:0 0;">2026 Stratejik Dönem (01.01.2026 - 31.12.2026)</div>
<div style="position:absolute;left:1272px;top:881.68px;font-size:24px;line-height:24px;color:#1e1e1e;font-weight:normal;white-space:nowrap;transform:scaleX(1.045);transform-origin:0 0;">Teknolojik</div>
<div style="position:absolute;left:1466.5px;top:881.68px;font-size:24px;line-height:24px;color:#1e1e1e;font-weight:normal;white-space:nowrap;transform-origin:0 0;">PAZARLAMA/SATIŞ</div>
<div style="position:absolute;left:1767px;top:881.68px;font-size:24px;line-height:24px;color:#1e1e1e;font-weight:normal;white-space:nowrap;transform:scaleX(1.045);transform-origin:0 0;">Pozitif</div>
<div style="position:absolute;right:1247.5px;top:881.68px;font-size:24px;line-height:24px;color:#1e1e1e;font-weight:normal;white-space:nowrap;transform:scaleX(1.045);transform-origin:100% 0;">5,00</div>
<div style="position:absolute;right:1019px;top:881.68px;font-size:24px;line-height:24px;color:#1e1e1e;font-weight:normal;white-space:nowrap;transform:scaleX(1.045);transform-origin:100% 0;">20,00</div>
<div style="position:absolute;right:849.5px;top:881.68px;font-size:24px;line-height:24px;color:#1e1e1e;font-weight:normal;white-space:nowrap;transform:scaleX(1.045);transform-origin:100% 0;">4</div>
<div style="position:absolute;left:2558px;top:876px;width:36px;height:36px;background:#878f79;border-radius:5px"></div>
<svg style="position:absolute;left:2558px;top:876px;" width="36" height="36" viewBox="0 0 36 36"><path d="M5.5 19.5L14.5 27.2L31 9.5" stroke="#fff" stroke-width="4" fill="none"/></svg>
<div style="position:absolute;left:632px;top:920px;width:2044px;height:54px;background:#f7ced3"></div>
<div style="position:absolute;left:632px;top:974px;width:2044px;height:2px;background:#cbc6c9"></div>
<div style="position:absolute;left:657px;top:937.68px;font-size:24px;line-height:24px;color:#1e1e1e;font-weight:normal;white-space:nowrap;transform:scaleX(1.06);transform-origin:0 0;">2026-2028 Stratejik Plan (01.01.2026 - 31.12.2028)</div>
<div style="position:absolute;left:1272px;top:937.68px;font-size:24px;line-height:24px;color:#1e1e1e;font-weight:normal;white-space:nowrap;transform:scaleX(1.045);transform-origin:0 0;">Çevresel</div>
<div style="position:absolute;left:1466.5px;top:937.68px;font-size:24px;line-height:24px;color:#1e1e1e;font-weight:normal;white-space:nowrap;transform:scaleX(1.045);transform-origin:0 0;">Genel Departmanlar</div>
<div style="position:absolute;left:1767px;top:937.68px;font-size:24px;line-height:24px;color:#1e1e1e;font-weight:normal;white-space:nowrap;transform:scaleX(1.045);transform-origin:0 0;">Negatif</div>
<div style="position:absolute;right:1247.5px;top:937.68px;font-size:24px;line-height:24px;color:#1e1e1e;font-weight:normal;white-space:nowrap;transform:scaleX(1.045);transform-origin:100% 0;">4,00</div>
<div style="position:absolute;right:1019px;top:937.68px;font-size:24px;line-height:24px;color:#1e1e1e;font-weight:normal;white-space:nowrap;transform:scaleX(1.045);transform-origin:100% 0;">16,00</div>
<div style="position:absolute;right:849.5px;top:937.68px;font-size:24px;line-height:24px;color:#1e1e1e;font-weight:normal;white-space:nowrap;transform:scaleX(1.045);transform-origin:100% 0;">4</div>
<div style="position:absolute;left:2558px;top:932px;width:36px;height:36px;background:#9b7e82;border-radius:5px"></div>
<svg style="position:absolute;left:2558px;top:932px;" width="36" height="36" viewBox="0 0 36 36"><path d="M5.5 19.5L14.5 27.2L31 9.5" stroke="#fff" stroke-width="4" fill="none"/></svg>
<div style="position:absolute;left:632px;top:976px;width:2044px;height:54px;background:#ecf0f1"></div>
<div style="position:absolute;left:632px;top:1030px;width:2044px;height:2px;background:#c6cbcd"></div>
<div style="position:absolute;left:657px;top:993.68px;font-size:24px;line-height:24px;color:#1e1e1e;font-weight:normal;white-space:nowrap;transform:scaleX(1.051);transform-origin:0 0;">2026 Stratejik Dönem (01.01.2026 - 31.12.2026)</div>
<div style="position:absolute;left:1272px;top:993.68px;font-size:24px;line-height:24px;color:#1e1e1e;font-weight:normal;white-space:nowrap;transform:scaleX(1.045);transform-origin:0 0;">Çevresel</div>
<div style="position:absolute;left:1466.5px;top:993.68px;font-size:24px;line-height:24px;color:#1e1e1e;font-weight:normal;white-space:nowrap;transform-origin:0 0;">OPERASYON</div>
<div style="position:absolute;left:1767px;top:993.68px;font-size:24px;line-height:24px;color:#1e1e1e;font-weight:normal;white-space:nowrap;transform:scaleX(1.045);transform-origin:0 0;">Pozitif</div>
<div style="position:absolute;right:1247.5px;top:993.68px;font-size:24px;line-height:24px;color:#1e1e1e;font-weight:normal;white-space:nowrap;transform:scaleX(1.045);transform-origin:100% 0;">4,00</div>
<div style="position:absolute;right:1019px;top:993.68px;font-size:24px;line-height:24px;color:#1e1e1e;font-weight:normal;white-space:nowrap;transform:scaleX(1.045);transform-origin:100% 0;">16,00</div>
<div style="position:absolute;right:849.5px;top:993.68px;font-size:24px;line-height:24px;color:#1e1e1e;font-weight:normal;white-space:nowrap;transform:scaleX(1.045);transform-origin:100% 0;">4</div>
<div style="position:absolute;left:2558px;top:988px;width:36px;height:36px;background:#8c9092;border-radius:5px"></div>
<svg style="position:absolute;left:2558px;top:988px;" width="36" height="36" viewBox="0 0 36 36"><path d="M5.5 19.5L14.5 27.2L31 9.5" stroke="#fff" stroke-width="4" fill="none"/></svg>
<div style="position:absolute;left:632px;top:1032px;width:2044px;height:54px;background:#f7ced3"></div>
<div style="position:absolute;left:632px;top:1086px;width:2044px;height:2px;background:#cbc6c9"></div>
<div style="position:absolute;left:657px;top:1049.68px;font-size:24px;line-height:24px;color:#1e1e1e;font-weight:normal;white-space:nowrap;transform:scaleX(1.051);transform-origin:0 0;">2026 Stratejik Dönem (01.01.2026 - 31.12.2026)</div>
<div style="position:absolute;left:1272px;top:1049.68px;font-size:24px;line-height:24px;color:#1e1e1e;font-weight:normal;white-space:nowrap;transform:scaleX(1.045);transform-origin:0 0;">Hukuki</div>
<div style="position:absolute;left:1466.5px;top:1049.68px;font-size:24px;line-height:24px;color:#1e1e1e;font-weight:normal;white-space:nowrap;transform-origin:0 0;">BİLGİ İŞLEM</div>
<div style="position:absolute;left:1767px;top:1049.68px;font-size:24px;line-height:24px;color:#1e1e1e;font-weight:normal;white-space:nowrap;transform:scaleX(1.045);transform-origin:0 0;">Negatif</div>
<div style="position:absolute;right:1247.5px;top:1049.68px;font-size:24px;line-height:24px;color:#1e1e1e;font-weight:normal;white-space:nowrap;transform:scaleX(1.045);transform-origin:100% 0;">5,00</div>
<div style="position:absolute;right:1019px;top:1049.68px;font-size:24px;line-height:24px;color:#1e1e1e;font-weight:normal;white-space:nowrap;transform:scaleX(1.045);transform-origin:100% 0;">25,00</div>
<div style="position:absolute;right:849.5px;top:1049.68px;font-size:24px;line-height:24px;color:#1e1e1e;font-weight:normal;white-space:nowrap;transform:scaleX(1.045);transform-origin:100% 0;">5</div>
<div style="position:absolute;left:2558px;top:1044px;width:36px;height:36px;background:#9b7e82;border-radius:5px"></div>
<svg style="position:absolute;left:2558px;top:1044px;" width="36" height="36" viewBox="0 0 36 36"><path d="M5.5 19.5L14.5 27.2L31 9.5" stroke="#fff" stroke-width="4" fill="none"/></svg>
<div style="position:absolute;left:632px;top:1088px;width:2044px;height:54px;background:#f7ced3"></div>
<div style="position:absolute;left:632px;top:1142px;width:2044px;height:2px;background:#cbc6c9"></div>
<div style="position:absolute;left:657px;top:1105.68px;font-size:24px;line-height:24px;color:#1e1e1e;font-weight:normal;white-space:nowrap;transform:scaleX(1.06);transform-origin:0 0;">2026-2028 Stratejik Plan (01.01.2026 - 31.12.2028)</div>
<div style="position:absolute;left:1272px;top:1105.68px;font-size:24px;line-height:24px;color:#1e1e1e;font-weight:normal;white-space:nowrap;transform:scaleX(1.045);transform-origin:0 0;">Hukuki</div>
<div style="position:absolute;left:1466.5px;top:1105.68px;font-size:24px;line-height:24px;color:#1e1e1e;font-weight:normal;white-space:nowrap;transform-origin:0 0;">İNSAN KAYNAKLARI</div>
<div style="position:absolute;left:1767px;top:1105.68px;font-size:24px;line-height:24px;color:#1e1e1e;font-weight:normal;white-space:nowrap;transform:scaleX(1.045);transform-origin:0 0;">Negatif</div>
<div style="position:absolute;right:1247.5px;top:1105.68px;font-size:24px;line-height:24px;color:#1e1e1e;font-weight:normal;white-space:nowrap;transform:scaleX(1.045);transform-origin:100% 0;">4,00</div>
<div style="position:absolute;right:1019px;top:1105.68px;font-size:24px;line-height:24px;color:#1e1e1e;font-weight:normal;white-space:nowrap;transform:scaleX(1.045);transform-origin:100% 0;">16,00</div>
<div style="position:absolute;right:849.5px;top:1105.68px;font-size:24px;line-height:24px;color:#1e1e1e;font-weight:normal;white-space:nowrap;transform:scaleX(1.045);transform-origin:100% 0;">4</div>
<div style="position:absolute;left:2558px;top:1100px;width:36px;height:36px;background:#9b7e82;border-radius:5px"></div>
<svg style="position:absolute;left:2558px;top:1100px;" width="36" height="36" viewBox="0 0 36 36"><path d="M5.5 19.5L14.5 27.2L31 9.5" stroke="#fff" stroke-width="4" fill="none"/></svg>
<div style="position:absolute;left:3284px;top:1266px;width:60px;height:60px;background:#fff;border-radius:0 0 0 22px;box-shadow:0 4px 14px rgba(0,0,0,.12)"></div>
<svg style="position:absolute;left:3296px;top:1278px;" width="36" height="36" viewBox="0 0 36 36"><g fill="none" stroke="#46598a" stroke-width="2.8"><circle cx="18" cy="18" r="14.5"/><ellipse cx="18" cy="18" rx="6" ry="14.5"/><path d="M4 13H32M4 23H32"/></g></svg>
<div style="position:absolute;left:3272px;top:1254.5px;width:43px;height:43px;background:#46598a;border-radius:50%"></div>
<div style="position:absolute;left:3272px;width:43px;text-align:center;top:1265.38px;font-size:22px;line-height:22px;font-weight:bold;color:#fff">16</div>
</body></html>
